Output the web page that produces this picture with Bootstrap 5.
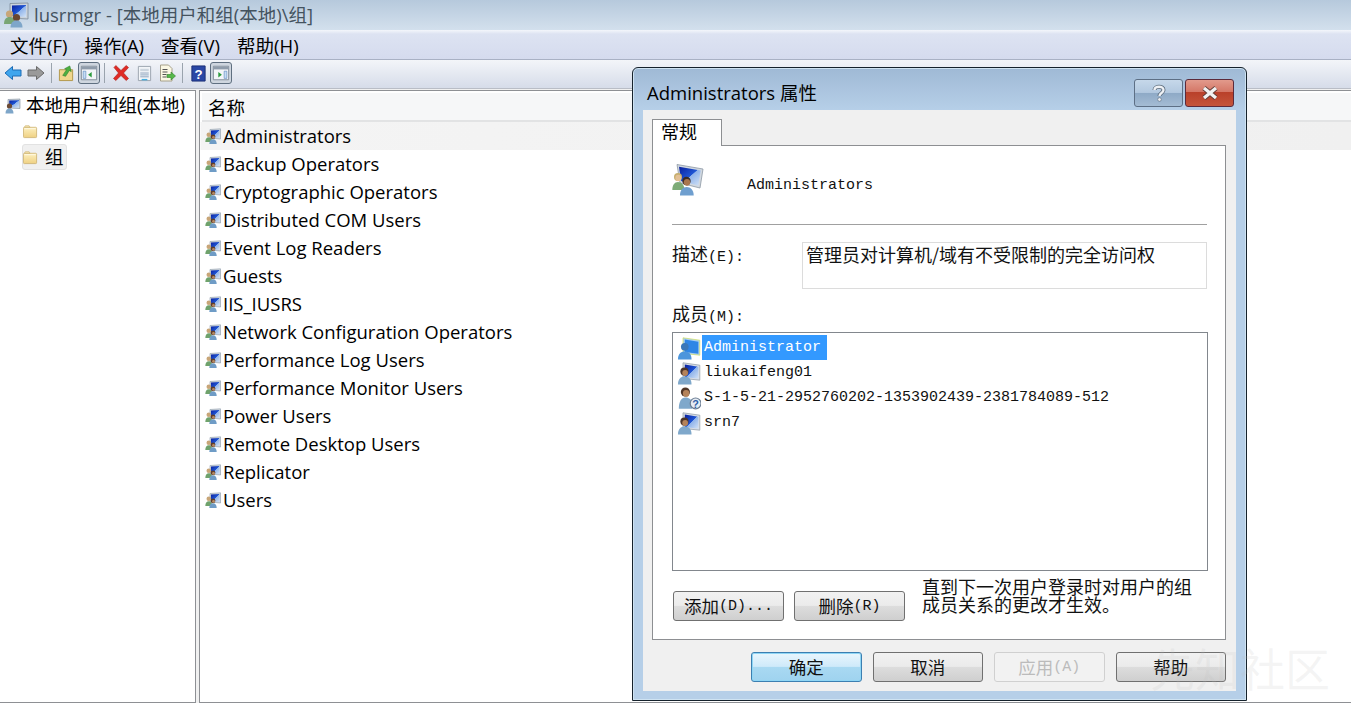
<!DOCTYPE html>
<html lang="zh-CN">
<head>
<meta charset="utf-8">
<title>lusrmgr</title>
<link href="https://cdn.jsdelivr.net/npm/bootstrap@5.3.0/dist/css/bootstrap.min.css" rel="stylesheet">
<style>
html,body{margin:0;height:703px;overflow:hidden;background:#fff}
body{font-family:"Open Sans","Noto Sans CJK SC",sans-serif;font-size:18.5px;color:#000;line-height:1}
.app{width:1351px;height:703px;position:relative;overflow:hidden}
.ttl{height:30px;background:linear-gradient(#b6c9dc,#d3e0ed);color:#44535f;padding-left:3px;gap:5px}
.mnu{height:30px;background:linear-gradient(#f3f6fb 0,#dde3f2 4px,#d5dbee);gap:17px;padding:3px 0 0 10px;border-bottom:1px solid #a9b1c4}
.tbr{height:29px;background:linear-gradient(#f3f5f9,#d6dce9);padding:0 0 2px 2px;border-bottom:1px solid #b9bdc6}
.tbt{width:22px;height:22px;display:flex;align-items:center;justify-content:center;margin-right:1px}
.tbt.on{border:1px solid #5f6f80;border-radius:3px;background:#cfd6df}
.tsep{width:1px;height:20px;background:#9aa3ad;margin:0 3px 0 3px}
.tsep.w2{margin-right:5px}
.tsep.w1{margin-right:4px}
.panes{height:614px;background:#f0f0f0;padding-top:1px}
.lft{width:196px;background:#fff;border:1px solid #8e9094;border-left:0;padding:2px 0 0 5px}
.rgt{margin-left:3px;flex:1;background:#fff;border:1px solid #8e9094;border-right:0;padding-top:2px}
.trow{height:25px;gap:5px;white-space:nowrap}
.tsub{margin-left:17px;padding:0 4px 0 1px;height:26px;gap:7px;width:45px;white-space:nowrap}
.tsub.on{background:#f0f0f0;border:1px solid #e2e2e2;border-radius:3px;padding-left:0}
.hdr{height:29px;background:#f6f7f8;border-bottom:2px solid #e2e3e4;padding:3px 0 0 6px;margin-left:2px}
.lrow{height:28px;gap:2px;padding-left:5px}
.lrow span{height:28px;display:flex;align-items:center;padding-right:4px}
.lrow.on{background:linear-gradient(90deg,#fff 0,#f4f4f4 1px,#f0f0f0)}
.lrow.on span{flex:1}
.dlg{position:absolute;left:632px;top:67px;width:615px;height:634px;border:1px solid #16222c;border-radius:6px 6px 0 0;background:linear-gradient(#9fb9d5 0,#b6cfe8 42px,#b6cfe8);box-shadow:inset 0 0 0 1px #cfe3f2;padding:0 10px 10px}
.dhead{height:42px;padding:8px 0 0 4px;font-size:18.5px}
.capb{height:28px;width:49px;border:1px solid #5d6f85;border-radius:3px;display:flex;align-items:center;justify-content:center}
.capb.hlp{background:linear-gradient(#c6d8ea 0,#b2c8df 48%,#8ea9c6 50%,#a4bcd4);margin-right:2px}
.capb.cls{width:49px;background:linear-gradient(#e29a8c 0,#d47767 45%,#b9402a 47%,#c5553b);border-color:#5c2a3b}
.capset{margin-right:2px}
.dbody{background:#f0f0f0;height:581px;padding:9px 10px 0 9px}
.tabh{height:27px;margin-bottom:-1px;position:relative;z-index:1}
.tabh .tabl{width:70px;height:27px;background:#fff;border:1px solid #8d8f92;border-bottom:0;display:flex;align-items:center;padding:0 0 2px 8px;font-size:18px}
.pagef{height:495px;background:#fff;border:1px solid #8d8f92;padding:0 18px 0 19px;font-family:"Liberation Mono","Noto Sans CJK SC",monospace;font-size:18px;color:#111}
.lat{font-size:15px;font-family:"Liberation Mono",monospace}
.pname{height:79px;border-bottom:1px solid #a0a0a0;align-items:center}
.pname .txt{margin-left:43px}
.pname svg{margin-top:-11px}
.pdesc{margin-top:17px;height:47px}
.pdesc label{width:130px;padding-top:2px;font-family:"Noto Sans CJK SC",sans-serif}
.pdesc .dbox{width:405px;height:47px;border:1px solid #dcdcdc;padding:2px 3px;font-family:"Noto Sans CJK SC",sans-serif}
.mlabel{margin-top:15px;height:28px;font-family:"Noto Sans CJK SC",sans-serif}
.mbox{width:536px;height:239px;border:1px solid #82878d;padding:2px 4px}
.mrow{height:25px;gap:1px;white-space:nowrap}
.mrow .nm{height:25px;display:flex;align-items:center;padding:0 6px 0 2px}
.mrow.on .nm{background:#3399ff;color:#fff}
.pact{margin-top:5px;height:60px}
.wbtn{width:111px;height:30px;border:1px solid #707070;border-radius:3px;background:linear-gradient(#f2f2f2 0,#ebebeb 48%,#dddddd 50%,#cfcfcf);color:#111;padding:0;font-size:17.5px;line-height:1;display:flex;align-items:center;justify-content:center;font-family:"Noto Sans CJK SC",sans-serif}
.wbtn.pri{border-color:#3c7fb1;background:linear-gradient(#e9f6fd 0,#cfeafa 48%,#a9d9f2 50%,#9fd3ef);box-shadow:inset 0 0 0 1px #8fd6f5}
.wbtn.off{border-color:#bfbfbf;background:#f4f4f4;color:#a0a0a0}
.adds{margin:15px 0 0 1px;gap:10px}
.hint{width:271px;margin-left:17px;font-family:"Noto Sans CJK SC",sans-serif;font-size:18px;line-height:18px;padding-top:1px}
.dfoot{margin-top:12px;gap:11px;padding-left:99px}
.wmk{position:absolute;left:1150px;top:645px;font-size:45px;color:rgba(190,190,190,.16);font-family:"Noto Sans CJK SC",sans-serif;white-space:nowrap;line-height:1}
</style>
</head>
<body>
<svg width="0" height="0" class="position-absolute">
<defs>
<linearGradient id="scr" x1="0" y1="0" x2="1" y2="1"><stop offset="0" stop-color="#0a1f9c"/><stop offset=".5" stop-color="#1f55d4"/><stop offset=".52" stop-color="#8fb3ea"/><stop offset="1" stop-color="#d3e3f6"/></linearGradient>
<linearGradient id="fold" x1="0" y1="0" x2="0" y2="1"><stop offset="0" stop-color="#fdf0c0"/><stop offset="1" stop-color="#efd183"/></linearGradient>
<symbol id="i-grp" viewBox="0 0 16 16">
<path d="M5 1.500 15.500 .8V11L5 10Z" fill="#d3d9e0" stroke="#8a98a8" stroke-width=".6"/><path d="M6 2.500 14.500 2V10L6 9.200Z" fill="url(#scr)"/>
<circle cx="3.800" cy="6.800" r="2.300" fill="#c8a678"/><path d="M.3 14c0-3 1.400-4.800 3.500-4.800S7.300 11 7.300 14Z" fill="#6fa26c"/>
<circle cx="8" cy="8.800" r="2.400" fill="#5f3e2a"/><circle cx="8.500" cy="9.400" r="1.400" fill="#b98a62"/><path d="M4.300 16c0-3 1.500-4.800 3.700-4.800s3.700 1.800 3.700 4.800Z" fill="#6f9cc6"/>
</symbol>
<symbol id="i-fld" viewBox="0 0 16 16">
<path d="M1.500 3.500h12a1 1 0 0 1 1 1v9a1 1 0 0 1-1 1h-12a1 1 0 0 1-1-1v-9a1 1 0 0 1 1-1Z" fill="url(#fold)" stroke="#c9ad6b" stroke-width=".8"/><path d="M2.500 1.800h4l1 1.700h-6Z" fill="#f6e5ae" stroke="#c9ad6b" stroke-width=".6"/><path d="M1.500 5h12" stroke="#fffbe8"/>
</symbol>
<symbol id="i-usr" viewBox="0 0 20 20">
<path d="M5 1.500 19 3.500V16L5 14.500Z" fill="#d9dee5" stroke="#8f9aa6" stroke-width=".6"/><path d="M6.500 3 17.800 4.800V14.800L6.500 13.400Z" fill="url(#scr)"/>
<circle cx="6.200" cy="8.800" r="3.400" fill="#4f3628"/><ellipse cx="6.800" cy="10" rx="2.400" ry="2.500" fill="#b5835a"/><path d="M.8 19.500c0-4.500 2.300-6.600 5.700-6.600s5.600 2 5.600 6.600Z" fill="#7fa8cb"/>
</symbol>
<symbol id="i-usel" viewBox="0 0 20 20">
<path d="M5 1.500 19 3.500V16L5 14.500Z" fill="#a8cdf2" stroke="#d3e060" stroke-width=".6"/><path d="M6.500 3 17.800 4.800V14.800L6.500 13.400Z" fill="#2f86e6"/>
<circle cx="6.500" cy="9" r="3.200" fill="#3a78b8"/><path d="M.8 19.500c0-4.500 2.300-6.600 5.700-6.600s5.600 2 5.600 6.600Z" fill="#4d96dc"/>
</symbol>
<symbol id="i-sid" viewBox="0 0 20 20">
<circle cx="7" cy="5" r="3.800" fill="#4f3628"/><ellipse cx="7.600" cy="6.200" rx="2.700" ry="2.800" fill="#b5835a"/><path d="M1.500 19c0-6 2-9.500 5.500-9.500s5 2 5.500 4.500v5Z" fill="#7fa8cb"/>
<circle cx="15.500" cy="14.500" r="4.500" fill="#e6ecf4" stroke="#6c7e94"/><text x="15.500" y="18" font-size="9" font-weight="700" text-anchor="middle" fill="#2d5da8" font-family="Liberation Sans">?</text>
</symbol>
<symbol id="i-top" viewBox="0 0 16 16">
<path d="M3 1.500 15 1v9.500L3 10Z" fill="#cdd5de" stroke="#7c8a99" stroke-width=".6"/><path d="M4.200 2.500 14 2.200v7.400L4.200 9.200Z" fill="url(#scr)"/>
<circle cx="4.500" cy="8" r="2.600" fill="#6d4b34"/><path d="M.5 15.500c0-3.400 1.500-5 4-5s4 1.600 4 5Z" fill="#7ea6c9"/>
</symbol>
<symbol id="i-ttl" viewBox="0 0 26 26">
<path d="M7 1.500 25 1v16L7 16Z" fill="#cbd3dc" stroke="#7c8a99" stroke-width=".8"/><path d="M9 3.500 23 3v12L9 14Z" fill="url(#scr)"/>
<circle cx="6.500" cy="12" r="3.600" fill="#c8a678"/><path d="M1 22c0-4.600 2.200-7 5.500-7S12 17.500 12 22Z" fill="#79a674"/>
<circle cx="13.500" cy="15.500" r="3.600" fill="#6a4630"/><path d="M7.500 25.500c0-4.600 2.500-7 6-7s6 2.400 6 7Z" fill="#7ea6c9"/>
</symbol>
<symbol id="i-dlg" viewBox="0 0 32 32">
<path d="M5 .5 31 5 28 24 8 19Z" fill="#d1d8e0" stroke="#8d98a4" stroke-width=".8"/><path d="M7 2.800 28.700 6.600 26.300 21.500 9 17Z" fill="url(#scr)"/>
<circle cx="6" cy="13" r="4" fill="#c6ae6e"/><ellipse cx="6.300" cy="14" rx="3" ry="3.200" fill="#e2c096"/><path d="M.3 26c0-5 2.200-8 5.700-8s6.500 3 6.500 8Z" fill="#7dab77"/>
<circle cx="14.500" cy="17" r="4.200" fill="#3d2c24"/><ellipse cx="15" cy="18.300" rx="3.200" ry="3.400" fill="#a8764e"/><path d="M8 31.500c0-5.500 2.800-8.500 6.700-8.500s7 3 7 8.500Z" fill="#6f9fcf"/>
</symbol>
<symbol id="t-back" viewBox="0 0 18 18"><path d="M1 9 8.500 2.500V6H17V12H8.500V15.500Z" fill="#3fa6ee" stroke="#1d6cb6"/></symbol>
<symbol id="t-fwd" viewBox="0 0 18 18"><path d="M17 9 9.500 2.500V6H1V12H9.500V15.500Z" fill="#9a9a9a" stroke="#6a6a6a"/></symbol>
<symbol id="t-up" viewBox="0 0 18 18"><path d="M1.500 5h14v11.500h-14Z" fill="#f0d68c" stroke="#b09648"/><path d="M5 11 9 5 7 4 12.500 1 14 7 12 5.800 8 12Z" fill="#4db041" stroke="#2d7d28" stroke-width=".6"/></symbol>
<symbol id="t-pan" viewBox="0 0 20 20"><path d="M1.500 2.500h17v15h-17Z" fill="#f3f5f8" stroke="#7b8794"/><path d="M2 3h16v3H2Z" fill="#8f9cab"/><path d="M3.500 8h3v8h-3Z" fill="#c6dcf3" stroke="#4a79b6" stroke-width=".6"/><path d="M13 9v6l-4-3Z" fill="#2a9a3c"/></symbol>
<symbol id="t-pan2" viewBox="0 0 20 20"><path d="M1.500 2.500h17v15h-17Z" fill="#f3f5f8" stroke="#7b8794"/><path d="M2 3h16v3H2Z" fill="#8f9cab"/><path d="M13.500 8h3v8h-3Z" fill="#c6dcf3" stroke="#4a79b6" stroke-width=".6"/><path d="M7 9v6l4-3Z" fill="#2a9a3c"/></symbol>
<symbol id="t-del" viewBox="0 0 18 18"><path d="M2 3.500 3.800 1.500 9 6.500 14.200 1.500 16.500 3.500 11.500 9 16.500 14.500 14.200 16.500 9 11.500 3.800 16.500 1.500 14.500 6.500 9Z" fill="#e02b25" stroke="#a81c18" stroke-width=".6"/></symbol>
<symbol id="t-prp" viewBox="0 0 18 18"><path d="M2.500 1.500h13v15h-13Z" fill="#f2f5f8" stroke="#9aa3ad"/><path d="M4.500 4h9v2.500h-9Z" fill="#ccd5de"/><path d="M4.500 8.500h9M4.500 10.500h9M4.500 12.500h9" stroke="#8ba2bc"/><path d="M6 15.500h6" stroke="#45aee0" stroke-width="1.500"/></symbol>
<symbol id="t-exp" viewBox="0 0 18 18"><path d="M2.500 1h8l3.500 3.500V17h-11.500Z" fill="#fbf8e4" stroke="#a6a08a"/><path d="M4.500 5.500h5M4.500 8h5M4.500 10.500h4M4.500 13h4" stroke="#555"/><path d="M9 10.500h4V8l4.500 4-4.500 4v-2.500h-4Z" fill="#55b84a" stroke="#318029" stroke-width=".6"/></symbol>
<symbol id="t-hlp" viewBox="0 0 18 18"><path d="M2 1h14v16H2Z" fill="#2a47a5" stroke="#1a2c74"/><text x="9" y="14.500" font-size="14" font-weight="700" text-anchor="middle" fill="#fff" font-family="Liberation Sans">?</text></symbol>
</defs>
</svg>
<div class="app d-flex flex-column">
<div class="ttl d-flex align-items-center"><svg width="26" height="26"><use href="#i-ttl"/></svg><span>lusrmgr - [本地用户和组(本地)\组]</span></div>
<div class="mnu d-flex align-items-center"><span>文件(F)</span><span>操作(A)</span><span>查看(V)</span><span>帮助(H)</span></div>
<div class="tbr d-flex align-items-center">
<span class="tbt"><svg width="18" height="18"><use href="#t-back"/></svg></span>
<span class="tbt"><svg width="18" height="18"><use href="#t-fwd"/></svg></span>
<span class="tsep"></span>
<span class="tbt"><svg width="17" height="17"><use href="#t-up"/></svg></span>
<span class="tbt on"><svg width="18" height="18"><use href="#t-pan"/></svg></span>
<span class="tsep w2"></span>
<span class="tbt"><svg width="18" height="18"><use href="#t-del"/></svg></span>
<span class="tbt"><svg width="17" height="17"><use href="#t-prp"/></svg></span>
<span class="tbt"><svg width="18" height="18"><use href="#t-exp"/></svg></span>
<span class="tsep w1"></span>
<span class="tbt"><svg width="17" height="17"><use href="#t-hlp"/></svg></span>
<span class="tbt on"><svg width="18" height="18"><use href="#t-pan2"/></svg></span>
</div>
<div class="panes d-flex">
<div class="lft">
<div class="trow d-flex align-items-center"><svg width="16" height="16"><use href="#i-top"/></svg><span>本地用户和组(本地)</span></div>
<div class="tsub d-flex align-items-center"><svg width="15" height="15" class="flex-shrink-0"><use href="#i-fld"/></svg><span>用户</span></div>
<div class="tsub on d-flex align-items-center"><svg width="15" height="15" class="flex-shrink-0"><use href="#i-fld"/></svg><span>组</span></div>
</div>
<div class="rgt">
<div class="hdr d-flex align-items-center">名称</div>
<div class="lrow on d-flex align-items-center"><svg width="16" height="16"><use href="#i-grp"/></svg><span>Administrators</span></div>
<div class="lrow d-flex align-items-center"><svg width="16" height="16"><use href="#i-grp"/></svg><span>Backup Operators</span></div>
<div class="lrow d-flex align-items-center"><svg width="16" height="16"><use href="#i-grp"/></svg><span>Cryptographic Operators</span></div>
<div class="lrow d-flex align-items-center"><svg width="16" height="16"><use href="#i-grp"/></svg><span>Distributed COM Users</span></div>
<div class="lrow d-flex align-items-center"><svg width="16" height="16"><use href="#i-grp"/></svg><span>Event Log Readers</span></div>
<div class="lrow d-flex align-items-center"><svg width="16" height="16"><use href="#i-grp"/></svg><span>Guests</span></div>
<div class="lrow d-flex align-items-center"><svg width="16" height="16"><use href="#i-grp"/></svg><span>IIS_IUSRS</span></div>
<div class="lrow d-flex align-items-center"><svg width="16" height="16"><use href="#i-grp"/></svg><span>Network Configuration Operators</span></div>
<div class="lrow d-flex align-items-center"><svg width="16" height="16"><use href="#i-grp"/></svg><span>Performance Log Users</span></div>
<div class="lrow d-flex align-items-center"><svg width="16" height="16"><use href="#i-grp"/></svg><span>Performance Monitor Users</span></div>
<div class="lrow d-flex align-items-center"><svg width="16" height="16"><use href="#i-grp"/></svg><span>Power Users</span></div>
<div class="lrow d-flex align-items-center"><svg width="16" height="16"><use href="#i-grp"/></svg><span>Remote Desktop Users</span></div>
<div class="lrow d-flex align-items-center"><svg width="16" height="16"><use href="#i-grp"/></svg><span>Replicator</span></div>
<div class="lrow d-flex align-items-center"><svg width="16" height="16"><use href="#i-grp"/></svg><span>Users</span></div>
</div>
</div>
<div class="dlg">
<div class="dhead d-flex align-items-center justify-content-between"><span>Administrators 属性</span>
<div class="d-flex capset"><span class="capb hlp"><svg width="16" height="18" viewBox="0 0 16 18"><path d="M3.500 6C3.500 2 12.500 1.500 12.500 6c0 3-4 3-4 6" fill="none" stroke="#5a6a7a" stroke-width="4"/><path d="M3.500 6C3.500 2 12.500 1.500 12.500 6c0 3-4 3-4 6" fill="none" stroke="#eef1f5" stroke-width="2.400"/><circle cx="8.500" cy="15.500" r="1.800" fill="#eef1f5" stroke="#5a6a7a" stroke-width=".6"/></svg></span><span class="capb cls"><svg width="18" height="14" viewBox="0 0 18 14"><path d="M3 2 15 12M15 2 3 12" stroke="#5f3a35" stroke-width="5"/><path d="M3 2 15 12M15 2 3 12" stroke="#f2f2f2" stroke-width="3.400"/></svg></span></div></div>
<div class="dbody">
<div class="tabh"><div class="tabl">常规</div></div>
<div class="pagef">
<div class="pname d-flex"><svg width="32" height="32"><use href="#i-dlg"/></svg><span class="txt lat">Administrators</span></div>
<div class="pdesc d-flex"><label><span>描述</span><span class="lat">(E):</span></label><div class="dbox">管理员对计算机/域有不受限制的完全访问权</div></div>
<div class="mlabel"><span>成员</span><span class="lat">(M):</span></div>
<div class="mbox">
<div class="mrow on d-flex align-items-center"><svg width="24" height="24"><use href="#i-usel"/></svg><span class="nm lat">Administrator</span></div>
<div class="mrow d-flex align-items-center"><svg width="24" height="24"><use href="#i-usr"/></svg><span class="nm lat">liukaifeng01</span></div>
<div class="mrow d-flex align-items-center"><svg width="24" height="24"><use href="#i-sid"/></svg><span class="nm lat">S-1-5-21-2952760202-1353902439-2381784089-512</span></div>
<div class="mrow d-flex align-items-center"><svg width="24" height="24"><use href="#i-usr"/></svg><span class="nm lat">srn7</span></div>
</div>
<div class="pact d-flex align-items-start">
<div class="adds d-flex"><button class="btn wbtn" type="button"><span>添加</span><span class="lat">(D)...</span></button><button class="btn wbtn" type="button"><span>删除</span><span class="lat">(R)</span></button></div>
<div class="hint">直到下一次用户登录时对用户的组成员关系的更改才生效。</div>
</div>
</div>
<div class="dfoot d-flex"><button class="btn wbtn pri" type="button">确定</button><button class="btn wbtn" type="button">取消</button><button class="btn wbtn off" type="button" disabled><span>应用</span><span class="lat">(A)</span></button><button class="btn wbtn" type="button">帮助</button></div>
</div>
</div>
<div class="wmk">先知社区</div>
</div>
</body>
</html>
